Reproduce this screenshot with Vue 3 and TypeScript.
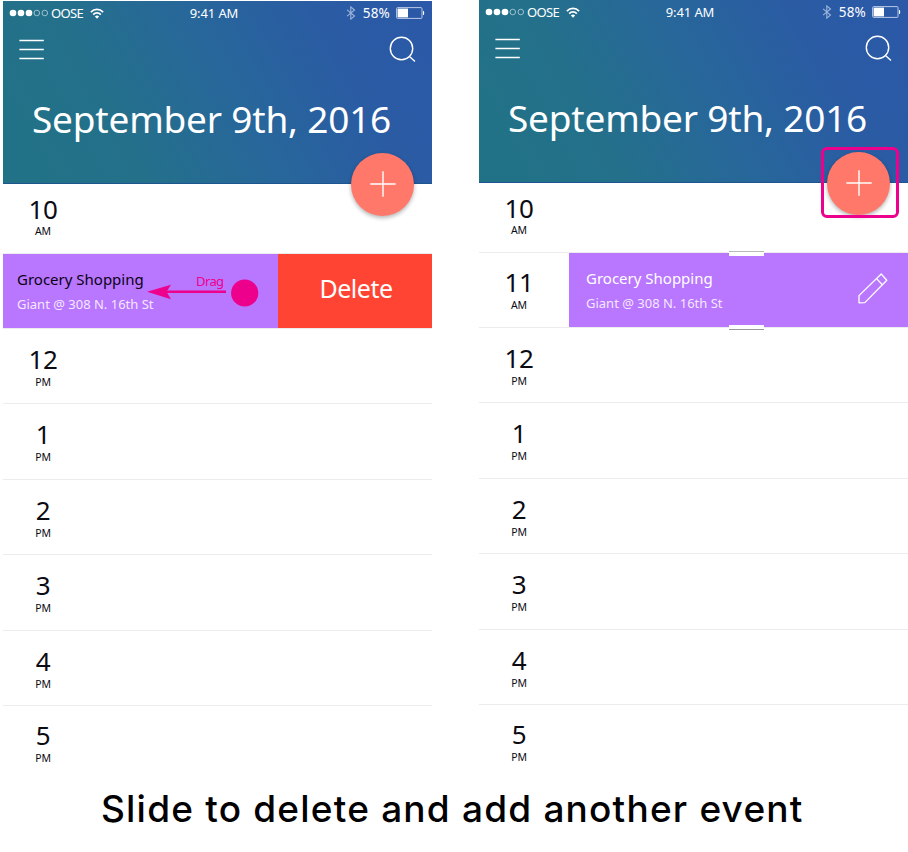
<script setup lang="ts">
interface Slot {
  hour: number
  period: 'AM' | 'PM'
  kind?: 'first' | 'event' | 'last'
}

interface Screen {
  id: string
  mode: 'delete' | 'create'
}

const slots: Slot[] = [
  { hour: 10, period: 'AM', kind: 'first' },
  { hour: 11, period: 'AM', kind: 'event' },
  { hour: 12, period: 'PM' },
  { hour: 1, period: 'PM' },
  { hour: 2, period: 'PM' },
  { hour: 3, period: 'PM' },
  { hour: 4, period: 'PM' },
  { hour: 5, period: 'PM', kind: 'last' },
]

const screens: Screen[] = [
  { id: 'left', mode: 'delete' },
  { id: 'right', mode: 'create' },
]
</script>

<template>
  <main class="board">
    <div class="screens">
      <section v-for="screen in screens" :key="screen.id" class="phone" :class="`mode-${screen.mode}`">
        <header class="header">
          <div class="status">
            <div class="carrier">
              <svg class="signal" width="40" height="10" viewBox="0 0 40 10">
                <circle cx="4" cy="5" r="3.3" fill="#fff" />
                <circle cx="12" cy="5" r="3.3" fill="#fff" />
                <circle cx="20" cy="5" r="3.3" fill="#fff" />
                <circle cx="27.8" cy="5" r="2.8" fill="none" stroke="#b9d3dd" stroke-width=".8" />
                <circle cx="35.8" cy="5" r="2.8" fill="none" stroke="#b9d3dd" stroke-width=".8" />
              </svg>
              <span class="operator">OOSE</span>
              <svg class="wifi" width="14" height="11" viewBox="0 0 14 11">
                <g fill="none" stroke="#fff" stroke-width="1.7">
                  <path d="M.9 4.1C4.3.5 9.7.5 13.1 4.1" />
                  <path d="M3.2 6.6c2.1-2.2 5.5-2.2 7.6 0" />
                </g>
                <path d="M4.9 8.5c1.2-1.2 3-1.2 4.2 0L7 10.7z" fill="#fff" />
              </svg>
            </div>
            <span class="clock">9:41 AM</span>
            <div class="power">
              <svg class="bluetooth" width="10" height="14" viewBox="0 0 9 14">
                <path d="M.6 3.8l7.4 6.2-3.7 3.1V.9L8 4 .6 10.2" fill="none" stroke="#9db5dc" stroke-width="1.1" />
              </svg>
              <span class="percent">58%</span>
              <svg class="battery" width="29" height="12" viewBox="0 0 29 12">
                <rect x=".6" y=".6" width="25.4" height="10.8" rx="1" fill="none" stroke="#b9c9e6" stroke-width="1" />
                <rect x="1.6" y="1.6" width="10.4" height="8.8" fill="#fff" />
                <path d="M27 4h.6c.8.5.8 3.5 0 4H27z" fill="#fff" />
              </svg>
            </div>
          </div>
          <div class="toolbar">
            <svg width="26" height="22" viewBox="0 0 26 22">
              <path d="M.4 1.5h24.4M.4 10.5h24.4M.4 19.5h24.4" stroke="#fff" stroke-width="1.4" />
            </svg>
            <svg width="27" height="27" viewBox="0 0 27 27">
              <g fill="none" stroke="#fff" stroke-width="1.4">
                <circle cx="12.5" cy="12.5" r="11.2" />
                <path d="M20.2 20.3l5.8 5.2" />
              </g>
            </svg>
          </div>
          <h1 class="date">September 9th, 2016</h1>
          <button class="add-button" type="button">
            <svg width="26" height="26" viewBox="0 0 26 26">
              <path d="M13 .3v25.4M.3 13h25.4" stroke="#fff" stroke-width="1.4" />
            </svg>
          </button>
          <span v-if="screen.mode === 'create'" class="focus-ring"></span>
        </header>

        <ul class="slots">
          <li v-for="slot in slots" :key="slot.hour" class="slot" :class="slot.kind">
            <div v-if="slot.kind !== 'event' || screen.mode === 'create'" class="time">
              <span class="hour">{{ slot.hour }}</span>
              <span class="period">{{ slot.period }}</span>
            </div>
            <template v-if="slot.kind === 'event'">
              <div class="card">
                <div class="details">
                  <span class="title">Grocery Shopping</span>
                  <span class="place">Giant @ 308 N. 16th St</span>
                </div>
                <template v-if="screen.mode === 'create'">
                  <svg class="pencil" width="30" height="31" viewBox="0 0 30 31">
                    <g fill="none" stroke="#fff" stroke-width="1.3" stroke-linejoin="round">
                      <path d="M1 22.6L23.2 1 28.8 7.2 6.8 29.6 1 29.8z" />
                      <path d="M18.6 5.6l5.7 6.2" />
                    </g>
                  </svg>
                  <span class="handle top"></span>
                  <span class="handle bottom"></span>
                </template>
                <div v-else class="drag">
                  <span class="drag-label">Drag</span>
                  <svg width="113" height="28" viewBox="0 0 113 28">
                    <path d="M0 12.8L24 5.8 19.500 12.8 24 20.2z" fill="#ec008c" />
                    <path d="M18 12.8h61" stroke="#ec008c" stroke-width="2.4" />
                    <circle cx="97.7" cy="14" r="13.6" fill="#ec008c" />
                  </svg>
                </div>
              </div>
              <button v-if="screen.mode === 'delete'" class="remove" type="button">Delete</button>
            </template>
          </li>
        </ul>
      </section>
    </div>
    <p class="caption">Slide to delete and add another event</p>
  </main>
</template>

<style>
body {
  margin: 0;
  background: #fff;
}
</style>

<style scoped>
.board {
  box-sizing: border-box;
  width: 908px;
  height: 852px;
  overflow: hidden;
  background: #fff;
  color: #0b0b14;
  font-family: "Noto Sans", "Open Sans", sans-serif;
}

.screens {
  display: flex;
  gap: 47px;
  height: 784px;
  padding-left: 3px;
}

.phone {
  width: 429px;
  flex: none;
}

.mode-delete {
  padding-top: 1px;
}

.header {
  position: relative;
  box-sizing: border-box;
  height: 183px;
  background: linear-gradient(62deg, #217286 5%, #24708b 28%, #27679a 52%, #2a5ca3 76%, #2b58a8);
  border-bottom: 1px solid #1d5591;
  color: #fff;
}

.status {
  display: grid;
  grid-template-columns: 1fr auto 1fr;
  align-items: center;
  height: 24px;
  padding: 0 6px;
  font-size: 13px;
  line-height: 24px;
}

.carrier,
.power {
  display: flex;
  align-items: center;
}

.operator {
  margin-left: 2px;
  letter-spacing: -0.65px;
}

.wifi {
  margin-left: 7px;
}

.clock {
  margin-right: 7px;
  letter-spacing: -0.1px;
}

.power {
  justify-content: flex-end;
}

.percent {
  margin: 0 6px 0 7px;
  font-size: 13.5px;
  letter-spacing: 0.2px;
}

.battery {
  margin-right: 1px;
}

.toolbar {
  display: flex;
  justify-content: space-between;
  align-items: center;
  height: 48px;
  padding: 1px 16px 0;
  box-sizing: border-box;
}

.date {
  margin: 22px 0 0 29px;
  font-size: 37px;
  line-height: 48px;
  font-weight: 400;
  letter-spacing: -0.2px;
  white-space: nowrap;
}

.add-button {
  position: absolute;
  right: 18px;
  bottom: -33px;
  display: grid;
  place-items: center;
  width: 63px;
  height: 63px;
  padding: 0 0 2px;
  border: 0;
  border-radius: 50%;
  background: #ff7869;
  box-shadow: 0 2px 4px rgba(0, 0, 0, 0.3);
}

.focus-ring {
  position: absolute;
  right: 9px;
  bottom: -36px;
  box-sizing: border-box;
  width: 78px;
  height: 71px;
  border: 3px solid #ec008c;
  border-radius: 6px;
}

.slots {
  margin: 0;
  padding: 0;
  list-style: none;
}

.slot {
  display: flex;
  box-sizing: border-box;
  height: 75.5px;
  border-bottom: 1px solid #ececee;
}

.slot.first {
  height: 69.5px;
}

.slot.event {
  height: 75px;
}

.slot.last {
  border-bottom: 0;
}

.time {
  display: flex;
  flex-direction: column;
  align-items: center;
  flex: none;
  box-sizing: border-box;
  width: 90px;
  padding: 17px 10px 0 0;
}

.first .time {
  padding-top: 12px;
}

.event .time,
.last .time {
  padding-top: 16px;
}

.hour {
  font-size: 26px;
  line-height: 26px;
  letter-spacing: -0.4px;
}

.period {
  margin-top: 4px;
  font-size: 10.5px;
  line-height: 12px;
  letter-spacing: -0.2px;
}

.first .period {
  margin-top: 3px;
}

.card {
  position: relative;
  display: flex;
  justify-content: space-between;
  flex: 1;
  background: #b976ff;
}

.details {
  display: flex;
  flex-direction: column;
  padding: 15px 0 0 17px;
  color: #fff;
  white-space: nowrap;
}

.mode-delete .details {
  padding-left: 14px;
}

.title {
  font-size: 15px;
  line-height: 20px;
}

.mode-delete .title {
  color: #0b0214;
}

.place {
  margin-top: 5px;
  font-size: 13px;
  line-height: 20px;
  color: #f3e8ff;
}

.pencil {
  margin: 20px 20px 0 0;
}

.handle {
  position: absolute;
  left: 160px;
  width: 35px;
  height: 4px;
  background: #fff;
}

.handle.top {
  top: -2px;
  border-top: 1px solid #b8b8b8;
}

.handle.bottom {
  bottom: -3px;
  border-bottom: 1px solid #999;
}

.drag {
  position: absolute;
  left: 144px;
  top: 25px;
}

.drag svg {
  display: block;
}

.drag-label {
  position: absolute;
  left: 49px;
  top: -6px;
  color: #ec008c;
  font-size: 13px;
  line-height: 16px;
  letter-spacing: -0.6px;
}

.remove {
  width: 154px;
  padding: 0 0 5px 2px;
  border: 0;
  background: #ff4433;
  color: #fff;
  font-family: inherit;
  font-size: 25px;
  letter-spacing: -0.5px;
}

.caption {
  margin: 0;
  padding-left: 101px;
  font-family: Inter, "Noto Sans", sans-serif;
  font-size: 37px;
  line-height: 50px;
  font-weight: 500;
  letter-spacing: 1.2px;
  color: #000;
  white-space: nowrap;
}
</style>
